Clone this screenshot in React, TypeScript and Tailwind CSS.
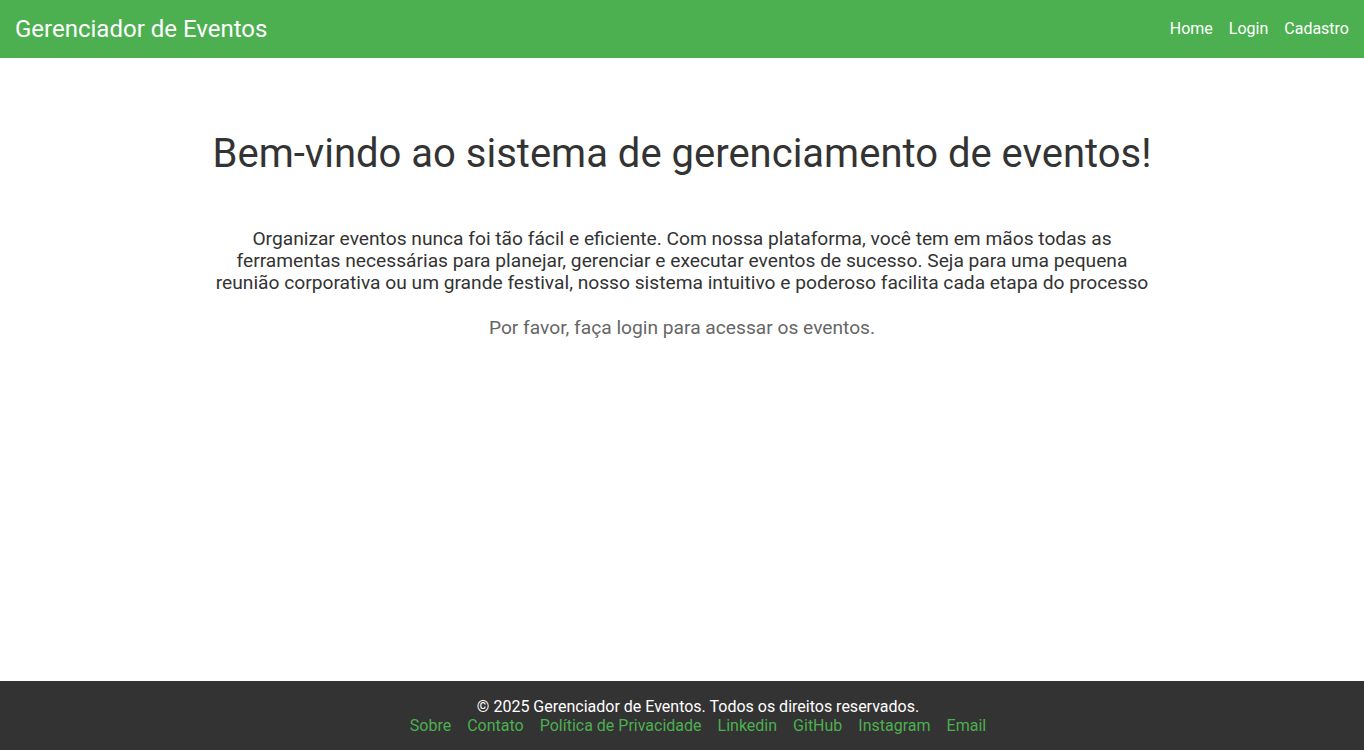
const navLinks = ["Home", "Login", "Cadastro"];
const footerLinks = ["Sobre", "Contato", "Política de Privacidade", "Linkedin", "GitHub", "Instagram", "Email"];

export default function App() {
  return (
    <div className="flex min-h-screen flex-col bg-white font-['Roboto','Liberation_Sans',sans-serif] text-[#333]">
      <header className="flex h-[58px] items-center justify-between bg-[#4CAF50] px-[15px] text-white">
        <h1 className="text-[24px] leading-none font-normal">Gerenciador de Eventos</h1>
        <nav className="flex gap-4 text-[16px]">
          {navLinks.map((l) => (
            <a key={l} href="#" className="text-white">
              {l}
            </a>
          ))}
        </nav>
      </header>

      <main className="mx-auto flex w-full max-w-[950px] flex-1 flex-col items-center pt-[72px] text-center">
        <h2 className="text-[40px] leading-[47px] font-normal text-[#333]">
          Bem-vindo ao sistema de gerenciamento de eventos!
        </h2>
        <p className="mt-[51px] text-[19.2px] leading-[22px] text-[#333]">
          Organizar eventos nunca foi tão fácil e eficiente. Com nossa plataforma, você tem em mãos todas as
          ferramentas necessárias para planejar, gerenciar e executar eventos de sucesso. Seja para uma pequena
          reunião corporativa ou um grande festival, nosso sistema intuitivo e poderoso facilita cada etapa do processo
        </p>
        <p className="mt-[23px] text-[19.2px] leading-[22px] text-[#666]">Por favor, faça login para acessar os eventos.</p>
      </main>

      {/* conteúdo deslocado 16px à direita, como no original */}
      <footer className="bg-[#333] pt-[16px] pb-[15px] pl-[32px] text-center text-[16px] leading-[19px] text-white">
        <p>© 2025 Gerenciador de Eventos. Todos os direitos reservados.</p>
        <div className="flex justify-center gap-4">
          {footerLinks.map((l) => (
            <a key={l} href="#" className="text-[#4CAF50]">
              {l}
            </a>
          ))}
        </div>
      </footer>
    </div>
  );
}
